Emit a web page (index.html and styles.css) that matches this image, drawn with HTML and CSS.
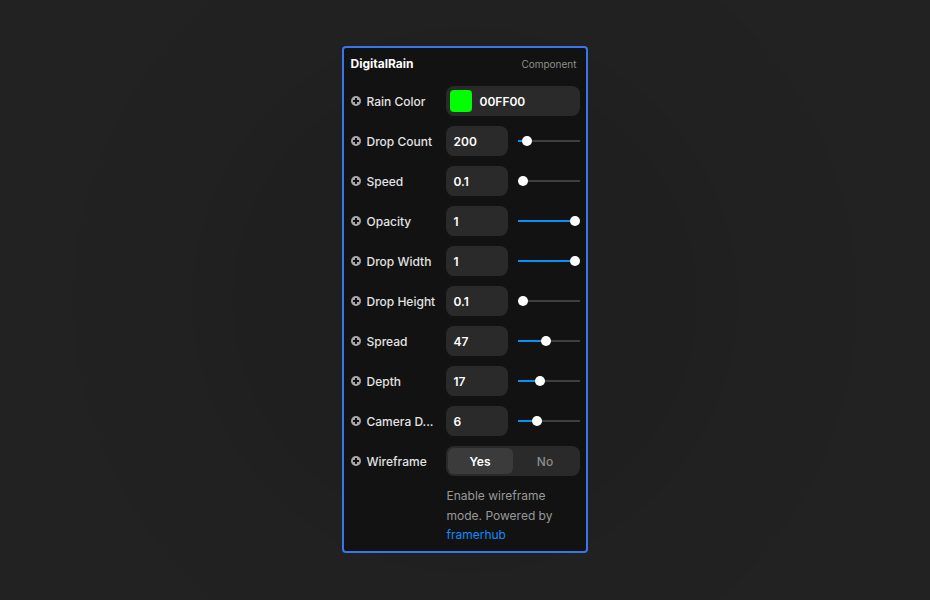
FILE: index.html
```html
<!DOCTYPE html>
<html>
<head>
<meta charset="utf-8">
<link rel="stylesheet" href="styles.css">
</head>
<body>
<div class="stage">
  <div class="panel">
    <div class="header">
      <span class="title">DigitalRain</span>
      <span class="kind">Component</span>
    </div>

    <div class="row">
      <div class="label"><span class="plus"></span><span>Rain Color</span></div>
      <div class="color-box"><span class="swatch"></span><span class="hex">00FF00</span></div>
    </div>

    <div class="row">
      <div class="label"><span class="plus"></span><span>Drop Count</span></div>
      <div class="num">200</div>
      <div class="slider"><div class="fill" style="width:9px"></div><div class="knob" style="left:9px"></div></div>
    </div>

    <div class="row">
      <div class="label"><span class="plus"></span><span>Speed</span></div>
      <div class="num">0.1</div>
      <div class="slider"><div class="fill" style="width:4px"></div><div class="knob" style="left:5px"></div></div>
    </div>

    <div class="row">
      <div class="label"><span class="plus"></span><span>Opacity</span></div>
      <div class="num">1</div>
      <div class="slider"><div class="fill" style="width:57px"></div><div class="knob" style="left:57px"></div></div>
    </div>

    <div class="row">
      <div class="label"><span class="plus"></span><span>Drop Width</span></div>
      <div class="num">1</div>
      <div class="slider"><div class="fill" style="width:57px"></div><div class="knob" style="left:57px"></div></div>
    </div>

    <div class="row">
      <div class="label"><span class="plus"></span><span>Drop Height</span></div>
      <div class="num">0.1</div>
      <div class="slider"><div class="fill" style="width:4px"></div><div class="knob" style="left:5px"></div></div>
    </div>

    <div class="row">
      <div class="label"><span class="plus"></span><span>Spread</span></div>
      <div class="num">47</div>
      <div class="slider"><div class="fill" style="width:28px"></div><div class="knob" style="left:28px"></div></div>
    </div>

    <div class="row">
      <div class="label"><span class="plus"></span><span>Depth</span></div>
      <div class="num">17</div>
      <div class="slider"><div class="fill" style="width:22px"></div><div class="knob" style="left:22px"></div></div>
    </div>

    <div class="row">
      <div class="label"><span class="plus"></span><span>Camera D...</span></div>
      <div class="num">6</div>
      <div class="slider"><div class="fill" style="width:19px"></div><div class="knob" style="left:19px"></div></div>
    </div>

    <div class="row">
      <div class="label"><span class="plus"></span><span>Wireframe</span></div>
      <div class="segment">
        <span class="seg active">Yes</span>
        <span class="seg">No</span>
      </div>
    </div>

    <div class="desc">
      Enable wireframe mode. Powered by <a class="link">framerhub</a>
    </div>
  </div>
</div>
</body>
</html>
```

FILE: styles.css
```css
* { box-sizing: border-box; }
html, body {
  margin: 0;
  padding: 0;
  width: 930px;
  height: 600px;
  overflow: hidden;
}
body {
  font-family: Inter, "Noto Sans", sans-serif;
  background: #222222;
}
.stage {
  width: 930px;
  height: 600px;
  display: flex;
  justify-content: center;
  align-items: flex-start;
  padding-top: 46px;
  background:
    radial-gradient(circle at 465px 300px,
      #1f1f1f 0 232px,
      #202020 232px 273px,
      #212121 273px 350px,
      #212121 350px 392px,
      #222222 392px);
}
.panel {
  width: 246px;
  height: 507px;
  margin-left: -1px;
  background: #121212;
  border: 2px solid #3a74ee;
  border-radius: 4px;
  padding: 8px 6px 8px 7px;
  display: flex;
  flex-direction: column;
}
.header {
  display: flex;
  justify-content: space-between;
  align-items: center;
  height: 14px;
  margin-bottom: 16px;
}
.title {
  color: #ffffff;
  font-size: 12px;
  font-weight: 700;
}
.kind {
  color: #8e8e8e;
  font-size: 10px;
  margin-top: 2px;
  margin-right: 3px;
}
.row {
  display: flex;
  align-items: center;
  height: 30px;
  margin-bottom: 10px;
}
.label {
  width: 95px;
  display: flex;
  align-items: center;
  gap: 5px;
  color: #e2e2e2;
  font-size: 12px;
  font-weight: 500;
  white-space: nowrap;
}
.label span:last-child { margin-left: 1px; }
.plus {
  width: 10px;
  height: 10px;
  border-radius: 50%;
  background: #a8a8a8;
  position: relative;
  flex: none;
}
.plus::before, .plus::after {
  content: "";
  position: absolute;
  background: #121212;
}
.plus::before { left: 2px; top: 4px; width: 6px; height: 2px; }
.plus::after { left: 4px; top: 2px; width: 2px; height: 6px; }
.color-box {
  width: 134px;
  height: 30px;
  background: #2a2a2a;
  border-radius: 8px;
  display: flex;
  align-items: center;
  padding-left: 4px;
  gap: 8px;
}
.swatch {
  width: 22px;
  height: 22px;
  background: #00ff00;
  border-radius: 4px;
}
.hex {
  color: #ffffff;
  font-size: 12px;
  font-weight: 600;
}
.num {
  width: 62px;
  height: 30px;
  background: #2a2a2a;
  border-radius: 8px;
  color: #ffffff;
  font-size: 12px;
  font-weight: 600;
  display: flex;
  align-items: center;
  padding-left: 8px;
}
.slider {
  width: 62px;
  height: 2px;
  margin-left: 10px;
  background: #3f3f3f;
  position: relative;
}
.fill {
  position: absolute;
  left: 0;
  top: 0;
  height: 2px;
  background: #0a8ff5;
}
.knob {
  position: absolute;
  top: -4px;
  width: 10px;
  height: 10px;
  margin-left: -5px;
  border-radius: 50%;
  background: #ffffff;
}
.segment {
  width: 134px;
  height: 30px;
  background: #2a2a2a;
  border-radius: 8px;
  padding: 2px;
  display: flex;
}
.seg {
  flex: 1;
  display: flex;
  align-items: center;
  justify-content: center;
  font-size: 12px;
  color: #8c8c8c;
  font-weight: 500;
  border-radius: 6px;
}
.seg.active {
  background: #3b3b3b;
  color: #ffffff;
  font-weight: 600;
}
.desc {
  margin-left: 96px;
  margin-top: 0;
  width: 120px;
  color: #999999;
  font-size: 12px;
  line-height: 19.5px;
}
.link {
  color: #0f8cff;
  text-decoration: none;
}
```
